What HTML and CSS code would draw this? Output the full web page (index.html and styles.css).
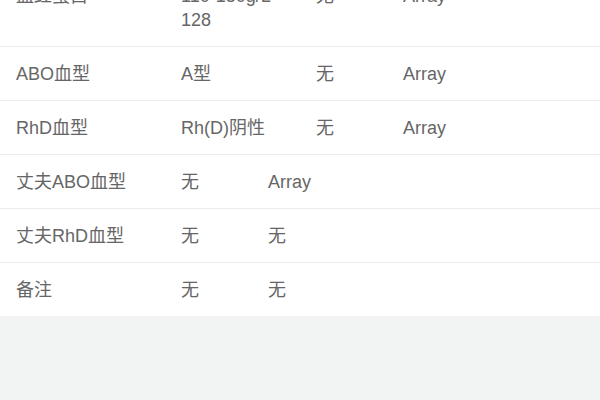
FILE: index.html
```html
<!DOCTYPE html>
<html lang="zh-CN">
<head>
<meta charset="utf-8">
<title>检查结果</title>
<link rel="stylesheet" href="styles.css">
</head>
<body>
<div class="list">
  <div class="row four">
    <div class="cell">血红蛋白</div>
    <div class="cell narrow">110-150g/L 128</div>
    <div class="cell">无</div>
    <div class="cell">Array</div>
  </div>
  <div class="row four">
    <div class="cell">ABO血型</div>
    <div class="cell">A型</div>
    <div class="cell">无</div>
    <div class="cell">Array</div>
  </div>
  <div class="row four">
    <div class="cell">RhD血型</div>
    <div class="cell">Rh(D)阴性</div>
    <div class="cell">无</div>
    <div class="cell">Array</div>
  </div>
  <div class="row three">
    <div class="cell">丈夫ABO血型</div>
    <div class="cell">无</div>
    <div class="cell">Array</div>
  </div>
  <div class="row three">
    <div class="cell">丈夫RhD血型</div>
    <div class="cell">无</div>
    <div class="cell">无</div>
  </div>
  <div class="row three last">
    <div class="cell">备注</div>
    <div class="cell">无</div>
    <div class="cell">无</div>
  </div>
</div>
</body>
</html>
```
FILE: styles.css
```css
html, body {
  margin: 0;
  padding: 0;
}
body {
  display: flow-root;
  background: #f2f3f3;
  font-family: "Liberation Sans", "Noto Sans CJK SC", sans-serif;
  font-size: 18px;
  line-height: 24px;
  color: #666666;
  width: 600px;
  height: 400px;
  overflow: hidden;
}
.list {
  background: #ffffff;
  margin-top: -31px;
}
.row {
  display: grid;
  padding: 15px 0 14px 16px;
  border-bottom: 1px solid #ebebeb;
}
.row.last {
  border-bottom: none;
}
.row.four {
  grid-template-columns: 165px 135px 87px 1fr;
}
.row.three {
  grid-template-columns: 165px 87px 1fr;
}
.row .cell:first-child {
  margin-left: -16px;
  padding-left: 16px;
}
.narrow {
  width: 100px;
}
```
